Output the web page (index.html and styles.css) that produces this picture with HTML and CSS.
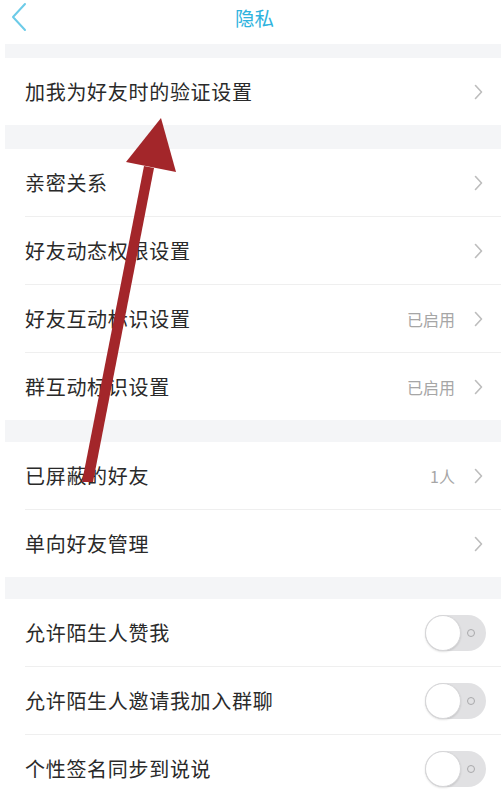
FILE: index.html
```html
<!DOCTYPE html>
<html lang="zh">
<head>
<meta charset="utf-8">
<link rel="stylesheet" href="styles.css">
</head>
<body>
<div class="page">
  <header class="nav">
    <svg class="back" width="16" height="30" viewBox="0 0 16 30"><polyline points="14,2 2,15 14,28" fill="none" stroke="#6ccbe8" stroke-width="2" stroke-linecap="round" stroke-linejoin="round"/></svg>
    <div class="title">隐私</div>
  </header>

  <div class="gap g1"></div>
  <div class="group">
    <div class="row first"><span class="label">加我为好友时的验证设置</span><span class="right"><svg class="chev" width="9" height="16" viewBox="0 0 9 16"><polyline points="1.5,1.5 7.5,8 1.5,14.5" fill="none" stroke="#bdbdbd" stroke-width="1.6" stroke-linecap="round" stroke-linejoin="round"/></svg></span></div>
  </div>

  <div class="gap g2"></div>
  <div class="group">
    <div class="row first"><span class="label">亲密关系</span><span class="right"><svg class="chev" width="9" height="16" viewBox="0 0 9 16"><polyline points="1.5,1.5 7.5,8 1.5,14.5" fill="none" stroke="#bdbdbd" stroke-width="1.6" stroke-linecap="round" stroke-linejoin="round"/></svg></span></div>
    <div class="row"><span class="label">好友动态权限设置</span><span class="right"><svg class="chev" width="9" height="16" viewBox="0 0 9 16"><polyline points="1.5,1.5 7.5,8 1.5,14.5" fill="none" stroke="#bdbdbd" stroke-width="1.6" stroke-linecap="round" stroke-linejoin="round"/></svg></span></div>
    <div class="row"><span class="label">好友互动标识设置</span><span class="right"><span class="value">已启用</span><svg class="chev" width="9" height="16" viewBox="0 0 9 16"><polyline points="1.5,1.5 7.5,8 1.5,14.5" fill="none" stroke="#bdbdbd" stroke-width="1.6" stroke-linecap="round" stroke-linejoin="round"/></svg></span></div>
    <div class="row"><span class="label">群互动标识设置</span><span class="right"><span class="value">已启用</span><svg class="chev" width="9" height="16" viewBox="0 0 9 16"><polyline points="1.5,1.5 7.5,8 1.5,14.5" fill="none" stroke="#bdbdbd" stroke-width="1.6" stroke-linecap="round" stroke-linejoin="round"/></svg></span></div>
  </div>

  <div class="gap g3"></div>
  <div class="group">
    <div class="row first"><span class="label">已屏蔽的好友</span><span class="right"><span class="value">1人</span><svg class="chev" width="9" height="16" viewBox="0 0 9 16"><polyline points="1.5,1.5 7.5,8 1.5,14.5" fill="none" stroke="#bdbdbd" stroke-width="1.6" stroke-linecap="round" stroke-linejoin="round"/></svg></span></div>
    <div class="row"><span class="label">单向好友管理</span><span class="right"><svg class="chev" width="9" height="16" viewBox="0 0 9 16"><polyline points="1.5,1.5 7.5,8 1.5,14.5" fill="none" stroke="#bdbdbd" stroke-width="1.6" stroke-linecap="round" stroke-linejoin="round"/></svg></span></div>
  </div>

  <div class="gap g3"></div>
  <div class="group">
    <div class="row first"><span class="label">允许陌生人赞我</span><span class="toggle"><span class="knob"></span><span class="ring"></span></span></div>
    <div class="row"><span class="label">允许陌生人邀请我加入群聊</span><span class="toggle"><span class="knob"></span><span class="ring"></span></span></div>
    <div class="row"><span class="label">个性签名同步到说说</span><span class="toggle"><span class="knob"></span><span class="ring"></span></span></div>
  </div>

  <svg class="arrow" width="501" height="796" viewBox="0 0 501 796">
    <polygon points="82,482 93,482 154,168 144,166" fill="#a3262a"/>
    <polygon points="161,118 126,162 176,172" fill="#a3262a"/>
  </svg>
</div>
</body>
</html>
```
FILE: styles.css
```css
html, body {
  margin: 0;
  padding: 0;
  background: #ffffff;
}
body {
  width: 501px;
  height: 796px;
  overflow: hidden;
  font-family: "Noto Sans CJK SC", "Noto Sans", sans-serif;
}
.page {
  position: relative;
  width: 501px;
  height: 796px;
  overflow: hidden;
}
.nav {
  height: 44px;
  display: flex;
  align-items: center;
  justify-content: center;
  position: relative;
}
.back {
  position: absolute;
  left: 11px;
  top: 2px;
}
.title {
  color: #2fb3de;
  font-size: 19.5px;
  margin-left: 8px;
  margin-top: -10px;
}
.gap {
  background: #f4f5f7;
  margin-left: 5px;
}
.g1 { height: 14px; }
.g2 { height: 24px; }
.g3 { height: 22px; }
.group {
  margin-left: 5px;
}
.row {
  height: 68px;
  display: flex;
  align-items: center;
  justify-content: space-between;
  margin-left: 20px;
  padding-right: 16px;
  border-top: 1px solid #efefef;
  box-sizing: border-box;
}
.row.first {
  border-top: none;
  height: 67px;
}
.label {
  font-size: 20px;
  color: #2a2a2a;
  letter-spacing: 0.7px;
}
.right {
  display: flex;
  align-items: center;
  gap: 18px;
}
.value {
  font-size: 16px;
  color: #a6a6a6;
  margin-right: 1px;
}
.chev {
  display: block;
  margin-right: 2px;
}
.toggle {
  position: relative;
  width: 61px;
  height: 36px;
  border-radius: 18px;
  background: #e1e1e3;
  margin-right: -1px;
}
.knob {
  position: absolute;
  left: 0;
  top: 0;
  width: 36px;
  height: 36px;
  border-radius: 50%;
  background: #ffffff;
  box-sizing: border-box;
  border: 1px solid #d6d6d8;
  box-shadow: 0 1px 2px rgba(0,0,0,0.12);
}
.ring {
  position: absolute;
  right: 11px;
  top: 14px;
  width: 8px;
  height: 8px;
  border-radius: 50%;
  box-sizing: border-box;
  border: 1.5px solid #a9a9ab;
}
.arrow {
  position: absolute;
  left: 0;
  top: 0;
  pointer-events: none;
}
```
